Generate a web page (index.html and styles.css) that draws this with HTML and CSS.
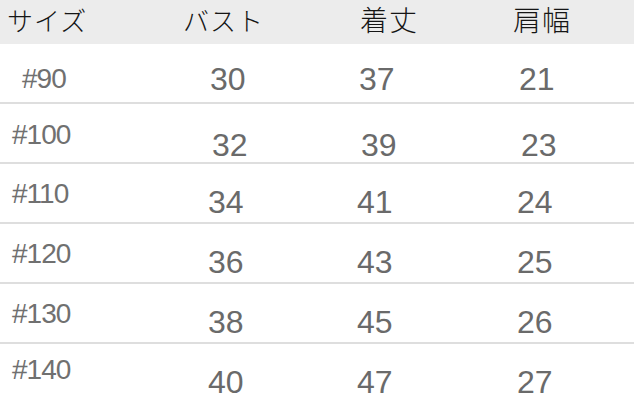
FILE: index.html
```html
<!DOCTYPE html>
<html lang="ja">
<head>
<meta charset="utf-8">
<link rel="stylesheet" href="styles.css">
</head>
<body>
<div class="chart">
  <div class="head">
    <div class="hcell">サイズ</div>
    <div class="hcell">バスト</div>
    <div class="hcell kanji">着丈</div>
    <div class="hcell kanji">肩幅</div>
  </div>
  <div class="row r1">
    <div class="label narrow">#90</div>
    <div class="num">30</div>
    <div class="num">37</div>
    <div class="num">21</div>
  </div>
  <div class="row r2">
    <div class="label">#100</div>
    <div class="num">32</div>
    <div class="num">39</div>
    <div class="num">23</div>
  </div>
  <div class="row">
    <div class="label">#110</div>
    <div class="num">34</div>
    <div class="num">41</div>
    <div class="num">24</div>
  </div>
  <div class="row">
    <div class="label">#120</div>
    <div class="num">36</div>
    <div class="num">43</div>
    <div class="num">25</div>
  </div>
  <div class="row">
    <div class="label">#130</div>
    <div class="num">38</div>
    <div class="num">45</div>
    <div class="num">26</div>
  </div>
  <div class="row r6 last">
    <div class="label">#140</div>
    <div class="num">40</div>
    <div class="num">47</div>
    <div class="num">27</div>
  </div>
</div>
</body>
</html>
```
FILE: styles.css
```css
html, body {
  margin: 0;
  padding: 0;
  background: #ffffff;
}
body {
  width: 634px;
  height: 407px;
  overflow: hidden;
}
.chart {
  display: flex;
  flex-direction: column;
}
.head {
  height: 44px;
  background: #ececec;
  display: grid;
  grid-template-columns: 176px 177px 153px 1fr;
}
.hcell {
  padding: 2px 0 0 7px;
  font-family: "Noto Sans CJK JP", sans-serif;
  font-size: 26px;
  line-height: 36px;
  color: #151515;
  font-weight: 300;
  letter-spacing: 1px;
}
.hcell.kanji {
  font-size: 28px;
  line-height: 38px;
  padding-top: 0;
}
.row {
  height: 58px;
  border-bottom: 2px solid #dedede;
  display: grid;
  grid-template-columns: 196px 149px 160px 1fr;
  align-items: start;
}
.row.last {
  border-bottom: none;
  height: 63px;
}
.label {
  padding: 15px 0 0 12px;
  font-family: "Liberation Sans", Arial, sans-serif;
  font-size: 28px;
  line-height: 29px;
  letter-spacing: -1px;
  color: #707070;
}
.label.narrow {
  padding-left: 22px;
}
.num {
  padding: 22px 0 0 12px;
  font-family: "Liberation Sans", Arial, sans-serif;
  font-size: 32px;
  line-height: 32px;
  color: #6a6a6a;
}
.r1 .label { padding-top: 20px; }
.r1 .num { padding-top: 19px; padding-left: 14px; }
.r2 .label { padding-top: 16px; }
.r2 .num { padding-top: 25px; padding-left: 16px; }
.r6 .label { padding-top: 11px; }
```
